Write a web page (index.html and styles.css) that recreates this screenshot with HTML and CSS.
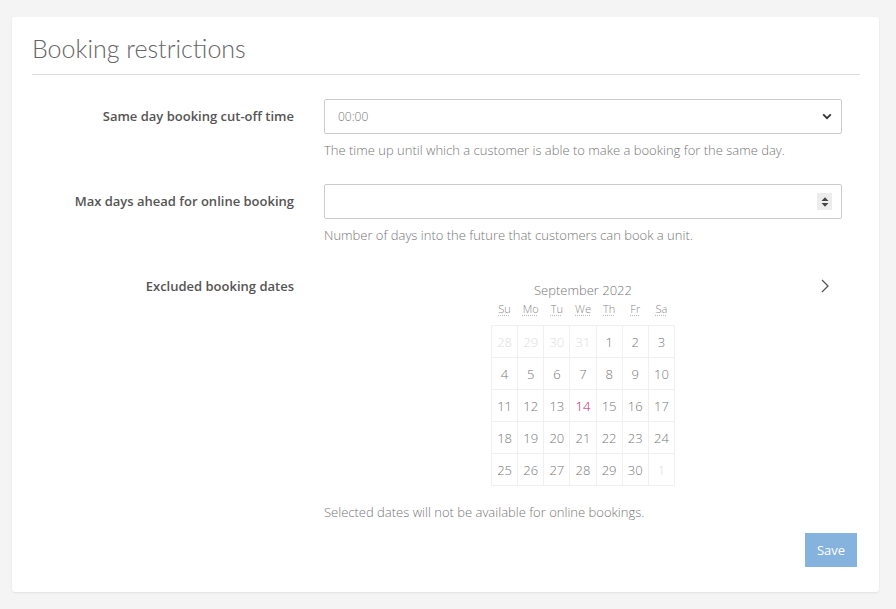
FILE: index.html
```html
<!DOCTYPE html>
<html lang="en">
<head>
<meta charset="utf-8">
<title>Booking restrictions</title>
<link rel="stylesheet" href="styles.css">
</head>
<body>
<div class="card">
  <h2 class="title">Booking restrictions</h2>
  <hr class="rule">
  <form class="form">
    <label class="label">Same day booking cut-off time</label>
    <div class="field">
      <div class="control">
        <select class="select"><option>00:00</option></select>
        <svg class="chev" width="10" height="7" viewBox="0 0 10 7"><path d="M1.2 1.4 L5 5.2 L8.8 1.4" fill="none" stroke="#333" stroke-width="1.8"/></svg>
      </div>
      <p class="help">The time up until which a customer is able to make a booking for the same day.</p>
    </div>

    <label class="label">Max days ahead for online booking</label>
    <div class="field">
      <div class="control">
        <input class="input" type="text" value="">
        <span class="spin"><svg width="14" height="16" viewBox="0 0 14 16"><path d="M3.5 7 L7 3.2 L10.5 7 Z" fill="#444"/><path d="M3.5 9 L7 12.8 L10.5 9 Z" fill="#444"/></svg></span>
      </div>
      <p class="help">Number of days into the future that customers can book a unit.</p>
    </div>

    <label class="label">Excluded booking dates</label>
    <div class="field">
      <div class="calendar">
        <div class="month">September 2022</div>
        <svg class="next" width="10" height="16" viewBox="0 0 10 16"><path d="M2 2 L8 8 L2 14" fill="none" stroke="#555" stroke-width="1.3"/></svg>
        <table class="days">
          <thead>
            <tr><th><abbr>Su</abbr></th><th><abbr>Mo</abbr></th><th><abbr>Tu</abbr></th><th><abbr>We</abbr></th><th><abbr>Th</abbr></th><th><abbr>Fr</abbr></th><th><abbr>Sa</abbr></th></tr>
          </thead>
          <tbody>
            <tr><td class="other">28</td><td class="other">29</td><td class="other">30</td><td class="other">31</td><td>1</td><td>2</td><td>3</td></tr>
            <tr><td>4</td><td>5</td><td>6</td><td>7</td><td>8</td><td>9</td><td>10</td></tr>
            <tr><td>11</td><td>12</td><td>13</td><td class="today">14</td><td>15</td><td>16</td><td>17</td></tr>
            <tr><td>18</td><td>19</td><td>20</td><td>21</td><td>22</td><td>23</td><td>24</td></tr>
            <tr><td>25</td><td>26</td><td>27</td><td>28</td><td>29</td><td>30</td><td class="other">1</td></tr>
          </tbody>
        </table>
      </div>
      <p class="help help-cal">Selected dates will not be available for online bookings.</p>
    </div>
  </form>
  <div class="actions">
    <button class="save" type="button">Save</button>
  </div>
</div>
</body>
</html>
```
FILE: styles.css
```css
html, body {
  margin: 0;
  padding: 0;
}
body {
  background: #f4f4f4;
  font-family: "Open Sans", "Liberation Sans", sans-serif;
  color: #555;
  padding: 17px 0 0 12px;
  height: 609px;
  box-sizing: border-box;
}
.card {
  width: 867px;
  box-sizing: border-box;
  background: #fff;
  border-radius: 3px;
  box-shadow: 0 1px 2px rgba(0,0,0,0.08);
  padding: 16px 19px 25px 20px;
}
.title {
  margin: 0;
  font-family: Lato, "Open Sans", sans-serif;
  font-weight: 300;
  font-size: 25px;
  line-height: 30px;
  color: #666;
}
.rule {
  margin: 11px 0 0;
  border: 0;
  border-top: 1px solid #ddd;
  height: 0;
}
.form {
  display: grid;
  grid-template-columns: 262px 518px;
  column-gap: 30px;
  margin-top: 24px;
}
.label {
  text-align: right;
  font-weight: 600;
  font-size: 13px;
  line-height: 35px;
  color: #555;
}
.field {
  margin-bottom: 25px;
}
.field:last-child {
  margin-bottom: 0;
}
.control {
  display: flex;
  align-items: center;
  height: 35px;
  box-sizing: border-box;
  border: 1px solid #ccc;
  border-radius: 2px;
  background: #fff;
  padding-right: 9px;
}
.select, .input {
  flex: 1;
  height: 100%;
  border: 0;
  outline: 0;
  background: transparent;
  -webkit-appearance: none;
  appearance: none;
  font-family: "Open Sans", sans-serif;
  font-size: 12px;
  font-weight: 300;
  color: #777;
  padding: 0 0 0 13px;
  margin: 0;
}
.chev {
  display: block;
}
.spin {
  display: flex;
  align-items: center;
  justify-content: center;
  width: 15px;
  height: 17px;
  background: #ececec;
}
.spin svg {
  display: block;
}
.help {
  margin: 7px 0 0;
  font-size: 13px;
  font-weight: 300;
  line-height: 18px;
  color: #777;
}
.calendar {
  position: relative;
  padding-top: 11px;
}
.month {
  text-align: center;
  font-size: 13px;
  font-weight: 300;
  line-height: 20px;
  color: #777;
}
.next {
  position: absolute;
  right: 12px;
  top: 9px;
}
.days {
  border-collapse: collapse;
  margin: 0 auto;
  width: 184px;
  table-layout: fixed;
}
.days th {
  font-weight: 300;
  font-size: 11px;
  line-height: 16px;
  height: 24px;
  padding: 1px 0 0;
  vertical-align: top;
  color: #888;
}
.days abbr {
  text-decoration: underline dotted #bbb;
  text-underline-offset: 2px;
}
.days td {
  border: 1px solid #f0f0f0;
  height: 31px;
  padding: 0;
  text-align: center;
  font-size: 13px;
  font-weight: 300;
  color: #777;
}
.days td.other {
  color: #ddd;
}
.days td.today {
  color: #c8176b;
}
.help-cal {
  margin-top: 17px;
}
.actions {
  display: flex;
  justify-content: flex-end;
  padding-right: 3px;
  margin-top: 12px;
}
.save {
  width: 52px;
  height: 34px;
  border: 0;
  border-radius: 0;
  background: #85b3dd;
  color: #fff;
  font-family: "Open Sans", sans-serif;
  font-size: 13px;
  padding: 0;
}
```
